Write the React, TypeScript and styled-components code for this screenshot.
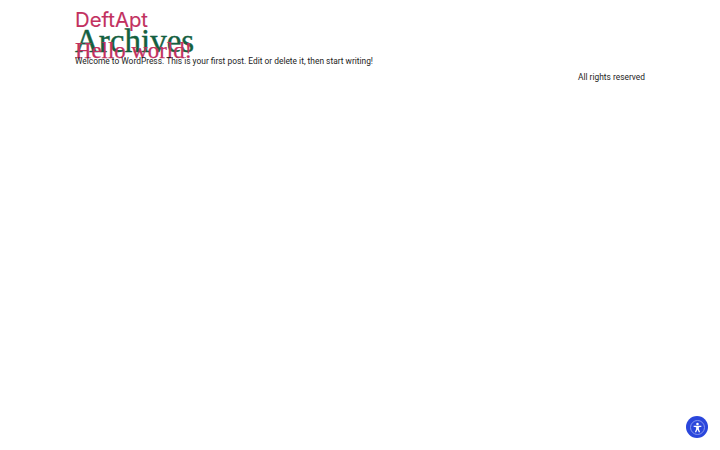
import React from "react";
import styled, { createGlobalStyle } from "styled-components";

const GlobalStyle = createGlobalStyle`
  html, body {
    margin: 0;
    padding: 0;
    background: #ffffff;
  }
`;

const AccessIcon = () => (
  <svg width="11" height="11" viewBox="0 0 24 24" fill="#ffffff">
    <circle cx="12" cy="4.5" r="2.8" />
    <path d="M3.5 8.2 L20.5 8.2 L20.5 10.4 L15 11.4 L15 15 L17.5 22 L15.2 22.8 L12 16.5 L8.8 22.8 L6.5 22 L9 15 L9 11.4 L3.5 10.4 Z" />
  </svg>
);

export default function App() {
  return (
    <>
      <GlobalStyle />
      <Page>
        <SiteTitle>DeftApt</SiteTitle>
        <ArchiveTitle>Archives</ArchiveTitle>
        <PostTitle>Hello world!</PostTitle>
        <PostBody>
          Welcome to WordPress. This is your first post. Edit or delete it, then
          start writing!
        </PostBody>
        <Footer>All rights reserved</Footer>
      </Page>
      <AccessButton aria-label="Accessibility">
        <AccessRing>
          <AccessIcon />
        </AccessRing>
      </AccessButton>
    </>
  );
}

const Page = styled.div`
  width: 720px;
  height: 450px;
  box-sizing: border-box;
  padding: 8px 75px 0;
  display: flex;
  flex-direction: column;
  overflow: hidden;
`;

const SiteTitle = styled.div`
  font-family: "Inter", "Liberation Sans", sans-serif;
  font-size: 20.3px;
  line-height: 24px;
  color: #c2305f;
  -webkit-text-stroke: 0.15px #c2305f;
`;

const ArchiveTitle = styled.h1`
  margin: -8px 0 0;
  font-family: "Liberation Serif", serif;
  font-size: 33px;
  font-weight: 400;
  line-height: 34px;
  color: #14603f;
  -webkit-text-stroke: 0.4px #14603f;
`;

const PostTitle = styled.h2`
  margin: -19px 0 0;
  font-family: "Liberation Serif", serif;
  font-size: 22.8px;
  font-weight: 400;
  line-height: 24px;
  color: #c2305f;
  -webkit-text-stroke: 0.25px #c2305f;
`;

const PostBody = styled.p`
  margin: -9px 0 0;
  font-family: "Roboto", "Liberation Sans", sans-serif;
  font-size: 8.4px;
  line-height: 14px;
  color: #1c1c1c;
`;

const Footer = styled.div`
  margin-top: 2px;
  text-align: right;
  font-family: "Roboto", "Liberation Sans", sans-serif;
  font-size: 8.4px;
  line-height: 14px;
  color: #1c1c1c;
`;

const AccessButton = styled.button`
  position: fixed;
  right: 12px;
  bottom: 12px;
  width: 22px;
  height: 22px;
  padding: 0;
  border: none;
  border-radius: 50%;
  background: #2a46dc;
  display: flex;
  align-items: center;
  justify-content: center;
`;

const AccessRing = styled.span`
  width: 15px;
  height: 15px;
  box-sizing: border-box;
  border: 1px solid #8796ec;
  border-radius: 50%;
  display: flex;
  align-items: center;
  justify-content: center;
`;
